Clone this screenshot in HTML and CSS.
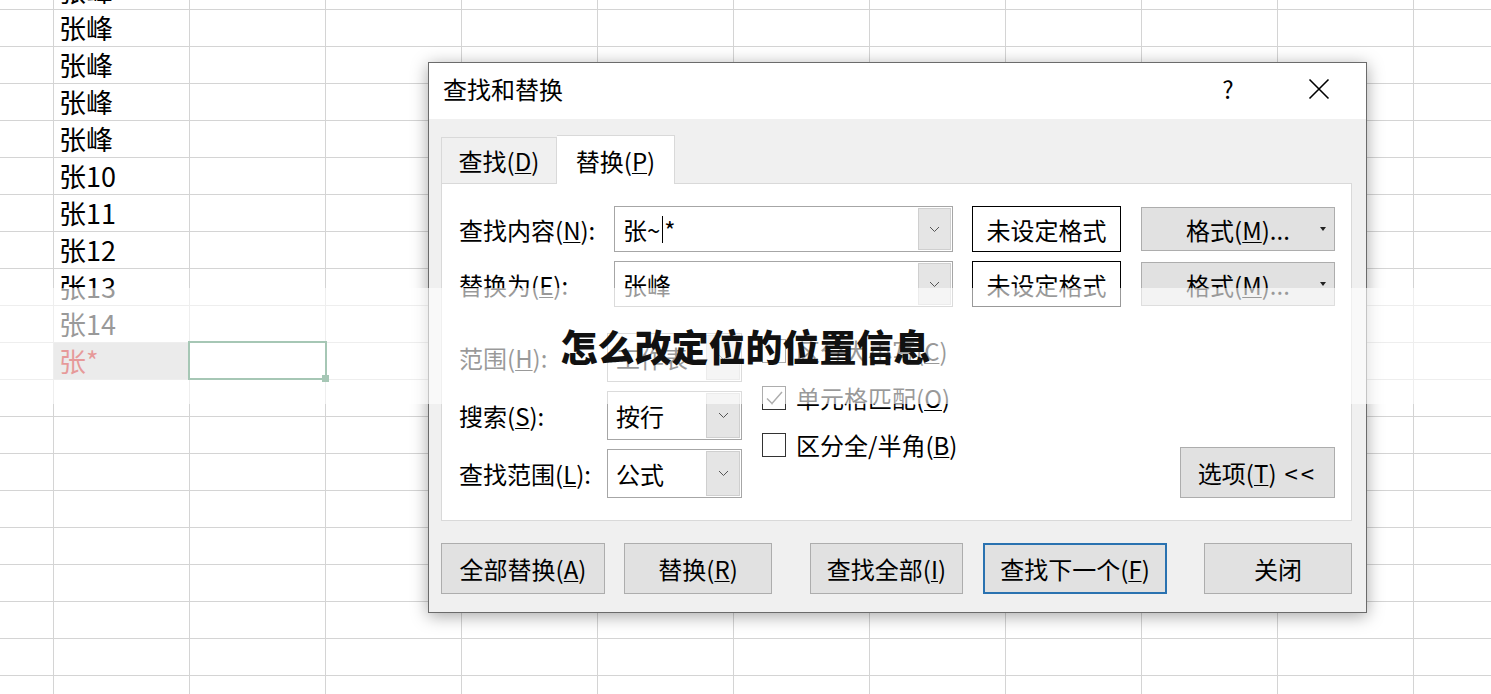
FILE: index.html
```html
<!DOCTYPE html>
<html lang="zh-CN">
<head>
    <meta charset="UTF-8">
    <title>查找和替换</title>
    <link rel="stylesheet" href="styles.css">
</head>
<body>
<!-- 工作表 -->
<div class="sheet">
    <div class="active"></div>
    <div class="cell">张峰</div>
    <div class="cell">张峰</div>
    <div class="cell">张峰</div>
    <div class="cell">张峰</div>
    <div class="cell">张峰</div>
    <div class="cell">张10</div>
    <div class="cell">张11</div>
    <div class="cell">张12</div>
    <div class="cell">张13</div>
    <div class="cell">张14</div>
    <div class="cell sel">张*</div>
</div>

<!-- 查找和替换 对话框 -->
<div class="dlg">
    <div class="tbar">
        <span class="ttl">查找和替换</span>
        <span class="tbtn help">?</span>
        <span class="tbtn close">
            <svg width="22" height="22" viewBox="0 0 22 22"><path d="M1.5 1.5L20.5 20.5M20.5 1.5L1.5 20.5" stroke="#000" stroke-width="1.6" fill="none"/></svg>
        </span>
    </div>
    <div class="dbody">
        <div class="tabs">
            <div class="tab">查找(<u>D</u>)</div>
            <div class="tab on">替换(<u>P</u>)</div>
        </div>
        <div class="panel">
            <div class="frow">
                <span class="lbl1">查找内容(<u>N</u>):</span>
                <div class="combo">
                    <span class="val">张~<i class="caret"></i>*</span>
                    <span class="dd"><svg width="11" height="7" viewBox="0 0 11 7"><path d="M1 1l4.5 4.5L10 1" fill="none" stroke="#555"/></svg></span>
                </div>
                <div class="fbox">未设定格式</div>
                <div class="fbtn">格式(<u>M</u>)...</div>
            </div>
            <div class="frow">
                <span class="lbl1">替换为(<u>E</u>):</span>
                <div class="combo">
                    <span class="val">张峰</span>
                    <span class="dd"><svg width="11" height="7" viewBox="0 0 11 7"><path d="M1 1l4.5 4.5L10 1" fill="none" stroke="#555"/></svg></span>
                </div>
                <div class="fbox">未设定格式</div>
                <div class="fbtn">格式(<u>M</u>)...</div>
            </div>
            <div class="lower">
                <div class="opts">
                    <div class="orow">
                        <span class="lbl2">范围(<u>H</u>):</span>
                        <div class="combo sm">
                            <span class="val">工作表</span>
                            <span class="dd"><svg width="11" height="7" viewBox="0 0 11 7"><path d="M1 1l4.5 4.5L10 1" fill="none" stroke="#555"/></svg></span>
                        </div>
                    </div>
                    <div class="orow">
                        <span class="lbl2">搜索(<u>S</u>):</span>
                        <div class="combo sm">
                            <span class="val">按行</span>
                            <span class="dd"><svg width="11" height="7" viewBox="0 0 11 7"><path d="M1 1l4.5 4.5L10 1" fill="none" stroke="#555"/></svg></span>
                        </div>
                    </div>
                    <div class="orow">
                        <span class="lbl2">查找范围(<u>L</u>):</span>
                        <div class="combo sm">
                            <span class="val">公式</span>
                            <span class="dd"><svg width="11" height="7" viewBox="0 0 11 7"><path d="M1 1l4.5 4.5L10 1" fill="none" stroke="#555"/></svg></span>
                        </div>
                    </div>
                </div>
                <div class="checks">
                    <div class="chk"><span class="box"></span>区分大小写(<u>C</u>)</div>
                    <div class="chk"><span class="box"><svg width="22" height="22" viewBox="0 0 22 22"><path d="M4 11.5l5 5L19 5" fill="none" stroke="#333" stroke-width="1.5"/></svg></span>单元格匹配(<u>O</u>)</div>
                    <div class="chk"><span class="box"></span>区分全/半角(<u>B</u>)</div>
                </div>
                <div class="more">选项(<u>T</u>) <span class="lt">&lt;&lt;</span></div>
            </div>
        </div>
        <div class="acts">
            <div class="btn b-all">全部替换(<u>A</u>)</div>
            <div class="btn b-rep">替换(<u>R</u>)</div>
            <div class="btn b-findall">查找全部(<u>I</u>)</div>
            <div class="btn b-next">查找下一个(<u>F</u>)</div>
            <div class="btn b-close">关闭</div>
        </div>
    </div>
</div>

<!-- 标题横幅 -->
<div class="band">
    <h1>怎么改定位的位置信息</h1>
</div>
</body>
</html>
```

FILE: styles.css
```css
* { margin: 0; padding: 0; box-sizing: border-box; }
body { width: 1491px; height: 694px; overflow: hidden; position: relative; background: #fff; color: #000;
       font-family: "Noto Sans CJK SC", "Microsoft YaHei", sans-serif; }
u { text-decoration: underline; text-underline-offset: 2px; text-decoration-thickness: 1px; }

/* 工作表 */
.sheet { display: grid; grid-template-columns: 53px repeat(10, 136px); grid-auto-rows: 37px; margin-top: -28px; height: 722px;
         background-image: linear-gradient(to bottom, #d4d4d4 1px, transparent 1px), linear-gradient(to right, #d4d4d4 1px, transparent 1px);
         background-size: 100% 37px, 136px 100%; background-position: 0 0, 53px 0; }
.cell { grid-column: 2; font-size: 27px; line-height: 37px; padding-left: 6px; white-space: nowrap; }
.cell.sel { color: #c00000; background: #cdcdcd; background-clip: padding-box; border-top: 1px solid transparent; border-left: 1px solid transparent; padding-left: 5px; line-height: 35px; }
.active { grid-column: 3; grid-row: 11; margin: -1px -2px -1px -1px; border: 2px solid #217346; position: relative; }
.active::after { content: ""; position: absolute; right: -4px; bottom: -4px; width: 7px; height: 7px; background: #217346; }

/* 对话框 */
.dlg { position: absolute; left: 428px; top: 62px; width: 939px; height: 551px; border: 1px solid #6b6b6b; background: #f0f0f0;
       box-shadow: 0 3px 16px rgba(0,0,0,.35); display: flex; flex-direction: column; z-index: 2; }
.tbar { height: 56px; background: #fff; display: flex; align-items: center; padding: 0 0 6px 14px; font-size: 24px; }
.ttl { flex: 1; }
.tbtn { height: 50px; display: flex; align-items: center; justify-content: center; }
.help { width: 88px; }
.close { width: 94px; padding-top: 2px; }

.dbody { flex: 1; padding: 16px 14px 17px 12px; display: flex; flex-direction: column; }
.tabs { display: flex; align-items: flex-end; height: 48px; }
.tab { width: 116px; height: 46px; border: 1px solid #d9d9d9; border-bottom: 0; font-size: 24px;
       display: flex; align-items: center; justify-content: center; }
.tab.on { width: 118px; height: 49px; margin-bottom: -1px; background: #fff; border-left: 0; position: relative; z-index: 1; }

.panel { height: 338px; border: 1px solid #d9d9d9; background: #fff; padding: 22px 16px 0 17px; }
.frow { display: flex; align-items: center; height: 46px; }
.frow + .frow { margin-top: 9px; }
.lbl1 { width: 155px; font-size: 24px; }
.lbl2 { width: 148px; font-size: 24px; }
.combo { width: 339px; height: 46px; border: 1px solid #a6a6a6; padding: 1px; display: flex; background: #fff; }
.combo .val { flex: 1; padding-left: 7px; font-size: 24px; display: flex; align-items: center; }
.combo .dd { width: 33px; background: #e5e5e5; border: 1px solid #cfcfcf; display: flex; align-items: center; justify-content: center; }
.combo.sm { width: 135px; height: 49px; }
.combo.sm .dd { width: 34px; }
.caret { display: inline-block; width: 1px; height: 27px; background: #000; margin: 0 1px 0 2px; }
.fbox { margin-left: 19px; width: 149px; height: 46px; border: 1px solid #000; font-size: 24px;
        display: flex; align-items: center; justify-content: center; }
.fbtn { margin-left: 20px; width: 194px; height: 44px; background: #e1e1e1; border: 1px solid #adadad; font-size: 24px;
        display: flex; align-items: center; justify-content: center; position: relative; }
.fbtn::after { content: ""; position: absolute; right: 8px; top: 19px; border-left: 3.5px solid transparent; border-right: 3.5px solid transparent; border-top: 4px solid #222; }

.lower { display: flex; margin-top: 26px; }
.opts { display: flex; flex-direction: column; gap: 9px; }
.orow { display: flex; align-items: center; height: 49px; }
.checks { margin-left: 20px; margin-top: -6px; display: flex; flex-direction: column; }
.chk { height: 47px; display: flex; align-items: center; font-size: 24px; }
.box { width: 24px; height: 24px; border: 1px solid #333; margin-right: 10px; display: flex; align-items: center; justify-content: center; }
.more { margin-left: auto; align-self: flex-end; width: 155px; height: 51px; background: #e1e1e1; border: 1px solid #adadad;
        font-size: 24px; display: flex; align-items: center; justify-content: center; }
.more .lt { margin-left: 8px; letter-spacing: 3px; }

.acts { display: flex; margin-top: 22px; height: 51px; }
.btn { height: 51px; background: #e1e1e1; border: 1px solid #adadad; font-size: 24px; display: flex; align-items: center; justify-content: center; }
.b-all { width: 164px; }
.b-rep { width: 148px; margin-left: 19px; }
.b-findall { width: 153px; margin-left: 38px; }
.b-next { width: 184px; margin-left: 20px; border: 2px solid #2a72b0; }
.b-close { width: 148px; margin-left: 37px; }

/* 标题横幅 */
.band { position: absolute; left: 0; top: 288px; width: 1491px; height: 116px; background: rgba(255,255,255,.6);
        display: flex; align-items: center; justify-content: center; z-index: 5; }
.band h1 { font-size: 37px; font-weight: 900; color: #111; line-height: 1; }
```
